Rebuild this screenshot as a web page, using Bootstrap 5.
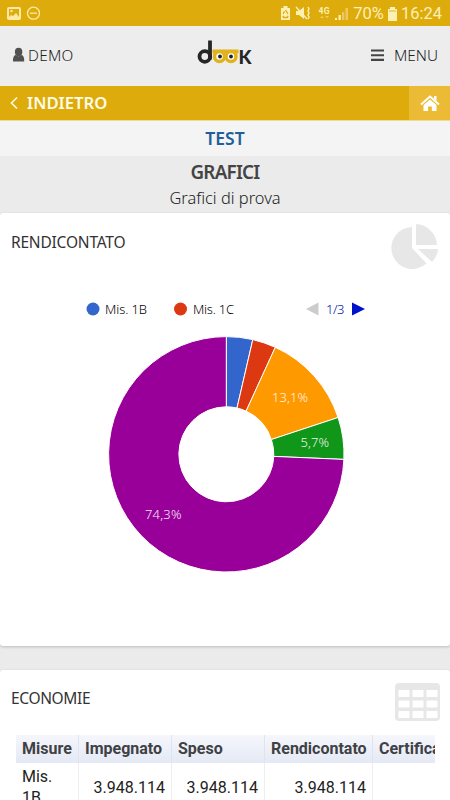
<!DOCTYPE html>
<html lang="it">
<head>
<meta charset="utf-8">
<meta name="viewport" content="width=device-width, initial-scale=1">
<title>Grafici</title>
<link href="https://cdn.jsdelivr.net/npm/bootstrap@5.3.0/dist/css/bootstrap.min.css" rel="stylesheet">
<style>
body{background:#ebebeb;font-family:"Noto Sans","Open Sans",sans-serif;color:#3c3c3c;height:800px;overflow:hidden}
svg{display:block;flex:none}
.status{height:26px;background:#deab0d;color:#fdf0b4;font:400 16.5px/26px Roboto,sans-serif;padding:1px 8px 0 7px}
.topbar{height:60px;background:#ededed;padding:0 12px 2px 12px;font-weight:300;font-size:15.3px;line-height:20px;color:#222}
.topbar .user{letter-spacing:.3px}
.topbar .logo{margin-left:4px}
.backbar{height:35px;background:#deab0d;border-bottom:1px solid #f0dc9a;color:#fffbe6;font-weight:600;font-size:16.7px}
.backbar .home{width:41px;background:#ecbb35}
.project{height:35px;background:#f4f4f4;color:#20609a;font-weight:600;font-size:17.5px;line-height:35px}
.heading{height:57px;background:#ebebeb}
.heading h1{font-size:18.8px;font-weight:600;line-height:32px;letter-spacing:-.75px;color:#444}
.heading p{font-size:16.4px;font-weight:300;line-height:20px;color:#222}
.panel{background:#fff;border:0;border-radius:3px;box-shadow:0 1px 3px rgba(0,0,0,.2)}
.panel h2{font-size:15.5px;font-weight:400;line-height:20px;margin:19px 0 0 3px;color:#333;letter-spacing:-.2px}
.panel .short-title{letter-spacing:-.35px;margin-top:18px}
.chart-panel{height:433px;margin-bottom:24px}
.panel-head{height:65px}
.table-panel{height:160px}
.grid-wrap{margin:0 15px 0 16px;overflow:hidden}
.grid-table{width:520px;table-layout:fixed;font:400 16px/21px Roboto,sans-serif;margin:0;color:#222}
.grid-table th{height:28px;padding:0 0 0 6px;font-size:16px;font-weight:700;line-height:26px;color:#3f4144;background:linear-gradient(#f5f7fc,#e4e9f4);border-right:1px solid #e0e4ec;white-space:nowrap}
.grid-table td{padding:0 6px;border-right:1px solid #eee;text-align:right;vertical-align:middle;height:48px}
.grid-table td:first-child{text-align:left}
</style>
<script src="https://cdn.jsdelivr.net/npm/bootstrap@5.3.0/dist/js/bootstrap.bundle.min.js"></script>
</head>
<body>
<div class="status d-flex align-items-center justify-content-between">
  <svg width="34" height="16" viewBox="0 0 34 16"><path fill="#fbe9a4" fill-rule="evenodd" d="M2 1h10q2 0 2 2v9q0 2-2 2H2q-2 0-2-2V3q0-2 2-2zm0 10 2-2 2 1 3-3 3 4V3H2z"/><circle cx="4.5" cy="5" r="1.2" fill="#fbe9a4"/><g fill="none" stroke="#fbe9a4" stroke-width="1.3"><circle cx="26.5" cy="7.2" r="6"/><path d="M23 7.2h7"/></g></svg>
  <div class="d-flex align-items-center">
    <svg width="72" height="24" viewBox="281 2 72 24"><path fill="#fdf0b4" d="M281 8h2.500V6h4v2h2.500v12h-9z"/><path d="m285.500 10 2.500 4m.2 1.700-1 1.800h-3.500l-.9-1.800m.2-1.700 1.500-2.700" fill="none" stroke="#deab0d" stroke-width="1.300"/><path fill="#fdf0b4" d="M296 11h3l5-4v12l-5-4h-3z"/><path d="m296 7 11 12" stroke="#fdf0b4" stroke-width="1.400"/><path d="m308 7 1 2-1 2 1 2-1 2 1 2-1 2" fill="none" stroke="#fdf0b4" stroke-width="1.400"/><text x="318.500" y="13.500" font-size="8.500" font-weight="700" textLength="11" fill="#fdf0b4">4G</text><path d="m320 18 2-2 2 2zm5-2h4l-2 2z" fill="#efcd65"/><path d="M335 18h2v2h-2zM338.500 15h2.300v5h-2.300z" fill="#fdf0b4"/><path d="M342 12h2.300v8H342zM345.500 8h2.500v12h-2.500z" fill="#ecc960"/></svg>
    <span>70%</span>
    <svg class="ms-1" width="13" height="16" viewBox="0 0 13 16"><path fill="#fdf0b4" d="M0 3h2V1h5v2h2v12H0z"/><path fill="#efd36f" d="M1 4h7v2H1z"/></svg>
    <span>16:24</span>
  </div>
</div>
<header class="topbar d-flex align-items-center justify-content-between">
  <div class="d-flex align-items-center user"><svg width="16" height="16" viewBox="0 0 16 16"><g fill="#505050"><ellipse cx="6.600" cy="5" rx="3.700" ry="4.200"/><path d="M1 14.500q-.3-6 2.800-6.500 2.800 2.500 5.600 0 3.100.5 2.800 6.500z"/></g></svg><span>DEMO</span></div>
  <svg class="logo" width="56" height="30" viewBox="197 40 56 30"><g transform="translate(0 .5)"><g fill="none" stroke="#262626" stroke-width="3.800"><circle cx="205.800" cy="56" r="5.300"/><path d="M211 40V59"/></g><path d="M213.500 49h26v4h-26z" fill="#e0b21c"/><g fill="#fff" stroke="#e0b21c" stroke-width="3.500"><circle cx="220.500" cy="56" r="5"/><circle cx="232" cy="56" r="5"/></g><circle cx="221" cy="56" r="1.900" fill="#222"/><circle cx="232" cy="56" r="1.900" fill="#222"/><text x="239.500" y="63" font-family="Lato" font-size="19.500" font-weight="900" textLength="13" lengthAdjust="spacingAndGlyphs" fill="#262626">K</text></g></svg>
  <div class="d-flex align-items-center"><svg width="23" height="14" viewBox="0 0 23 14"><path d="M0 2.500h13M0 7.200h13M0 11.900h13" stroke="#444" stroke-width="2.100"/></svg><span>MENU</span></div>
</header>
<nav class="backbar d-flex justify-content-between">
  <div class="d-flex align-items-center"><svg width="27" height="14" viewBox="0 0 27 14"><path d="m17 1.500-5.500 5.500 5.500 5.500" fill="none" stroke="#fff8d8" stroke-width="1.700"/></svg><span>INDIETRO</span></div>
  <div class="home d-flex align-items-center justify-content-center"><svg width="20" height="18" viewBox="0 0 20 18"><path fill="#fff" fill-rule="evenodd" d="m10 5.500 6.500 5.500v6h-4.600v-4.600H8.100V17H3.500v-6z"/><path d="m1 10.500 9-8 9 8" fill="none" stroke="#fff" stroke-width="1.800"/><path fill="#fff" d="M14 2h2.500v5L14 5z"/></svg></div>
</nav>
<div class="project text-center">TEST</div>
<div class="heading text-center"><h1 class="m-0">GRAFICI</h1><p class="m-0">Grafici di prova</p></div>
<section class="card panel chart-panel">
  <div class="panel-head d-flex justify-content-between ps-2 pe-2">
    <h2>RENDICONTATO</h2>
    <svg class="mt-2 me-1" width="48" height="50" viewBox="390 221 48 50"><g fill="#e7e7e7"><path d="M412 227v21l14.500 15.500A21 21 0 1 1 412 227z"/><path d="M416 224a22 22 0 0 1 21 21h-21zM418 249h20q-.5 7-6 13z"/></g></svg>
  </div>
  <svg width="450" height="310" viewBox="0 278 450 310" font-family="Noto Sans" font-weight="300" font-size="13">
    <circle cx="93" cy="309" r="6.500" fill="#3366cc"/><text x="105" y="314" textLength="42" fill="#000">Mis. 1B</text>
    <circle cx="180.500" cy="309" r="6.500" fill="#dc3912"/><text x="193" y="314" textLength="41" fill="#000">Mis. 1C</text>
    <path d="M318.500 302.500v13L306 309z" fill="#ccc"/><text x="326" y="314" textLength="18.500" fill="#0011aa">1/3</text><path d="M352 302.500v13l13-6.500z" fill="#0011cc"/>
    <g stroke="#fff" stroke-width="1">
      <path fill="#3366cc" d="M226.300 336.600A117.700 117.700 0 0 1 252.800 339.600L237 408A47.500 47.500 0 0 0 226.300 406.800z"/>
      <path fill="#dc3912" d="M252.800 339.600A117.700 117.700 0 0 1 275.300 347.300L246.100 411.100A47.500 47.500 0 0 0 237 408z"/>
      <path fill="#ff9900" d="M275.300 347.300A117.700 117.700 0 0 1 338.100 417.500L271.400 439.500A47.500 47.500 0 0 0 246.100 411.100z"/>
      <path fill="#109618" d="M338.100 417.500A117.700 117.700 0 0 1 343.900 459.400L273.800 456.400A47.500 47.500 0 0 0 271.400 439.500z"/>
      <path fill="#990099" d="M343.900 459.400A117.700 117.700 0 1 1 226.300 336.600L226.300 406.800A47.500 47.500 0 1 0 273.800 456.400z"/>
    </g>
    <g fill="#fff" opacity=".92"><text x="272" y="402" textLength="36">13,1%</text><text x="300.500" y="447" textLength="28.500">5,7%</text><text x="145" y="519" textLength="36.500">74,3%</text></g>
  </svg>
</section>
<section class="card panel table-panel">
  <div class="panel-head d-flex justify-content-between ps-2 pe-2">
    <h2 class="short-title">ECONOMIE</h2>
    <svg class="mt-2 me-0" width="47" height="46" viewBox="395 678 47 46"><rect x="395" y="683" width="45" height="38" rx="4" fill="#e7e7e7"/><path fill="#fff" d="M398.500 690h11v7h-11zm14 0h11v7h-11zm14 0h11v7h-11zm-28 10.500h11v7h-11zm14 0h11v7h-11zm14 0h11v7h-11zM398.500 711h11v7h-11zm14 0h11v7h-11zm14 0h11v7h-11z"/></svg>
  </div>
  <div class="grid-wrap">
    <table class="grid-table">
      <colgroup><col style="width:62.5px"><col style="width:93px"><col style="width:93px"><col style="width:108px"><col></colgroup>
      <thead><tr><th>Misure</th><th>Impegnato</th><th>Speso</th><th>Rendicontato</th><th>Certificato</th></tr></thead>
      <tbody><tr><td>Mis.<br>1B</td><td>3.948.114</td><td>3.948.114</td><td>3.948.114</td><td></td></tr></tbody>
    </table>
  </div>
</section>
</body>
</html>
